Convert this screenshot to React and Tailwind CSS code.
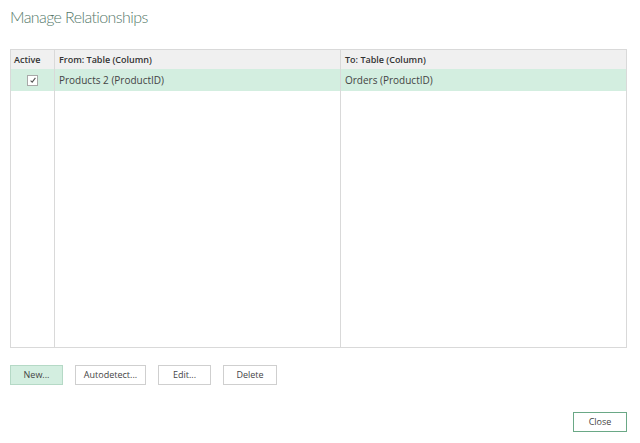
export default function App() {
  const font = { fontFamily: '"Open Sans", "Noto Sans", sans-serif' };
  return (
    <div className="w-[640px] h-[443px] bg-white relative overflow-hidden text-[#444]" style={font}>
      <div className="pl-[10px] pt-[6px] h-[49px]">
        <h1 className="text-[16px] font-light text-[#56796a] leading-[22px] tracking-[-0.6px]" style={{ fontFamily: 'Lato, "Open Sans", sans-serif' }}>Manage Relationships</h1>
      </div>
      <div className="mx-[10px] w-[617px] h-[299px] border border-[#d9d9d9] flex flex-col">
        <div className="flex h-[19px] bg-[#f0f0f0] text-[9px] font-semibold text-[#333] leading-[19px]">
          <div className="w-[44px] pl-[3px] border-r border-[#d9d9d9]">Active</div>
          <div className="w-[286px] pl-[4px] border-r border-[#d9d9d9]">From: Table (Column)</div>
          <div className="flex-1 pl-[4px]">To: Table (Column)</div>
        </div>
        <div className="flex h-[22px] bg-[#d3eee0] text-[10px] leading-[22px] text-[#444]">
          <div className="w-[44px] border-r border-[#d9d9d9] flex items-center justify-center">
            <div className="w-[11px] h-[11px] border border-[#a8a8a8] bg-white flex items-center justify-center">
              <svg width="8" height="8" viewBox="0 0 8 8"><path d="M1.6 4.6 L3.2 6.1 L6.4 1.8" fill="none" stroke="#555" strokeWidth="1.1" /></svg>
            </div>
          </div>
          <div className="w-[286px] pl-[4px] border-r border-[#d9d9d9]">Products 2 (ProductID)</div>
          <div className="flex-1 pl-[4px]">Orders (ProductID)</div>
        </div>
        <div className="flex flex-1">
          <div className="w-[44px] border-r border-[#d9d9d9]"></div>
          <div className="w-[286px] border-r border-[#d9d9d9]"></div>
          <div className="flex-1"></div>
        </div>
      </div>
      <div className="flex gap-[12px] pl-[10px] pt-[17px] text-[9px] text-[#444]">
        <button className="w-[53px] h-[20px] bg-[#d3eee0] border border-[#b5d9c6]">New...</button>
        <button className="w-[71px] h-[20px] bg-white border border-[#cfcfcf]">Autodetect...</button>
        <button className="w-[53px] h-[20px] bg-white border border-[#cfcfcf]">Edit...</button>
        <button className="w-[54px] h-[20px] bg-white border border-[#cfcfcf]">Delete</button>
      </div>
      <div className="flex justify-end pr-[13px] pt-[27px] text-[9px] text-[#444]">
        <button className="w-[54px] h-[20px] bg-white border border-[#6aa886]">Close</button>
      </div>
    </div>
  );
}
